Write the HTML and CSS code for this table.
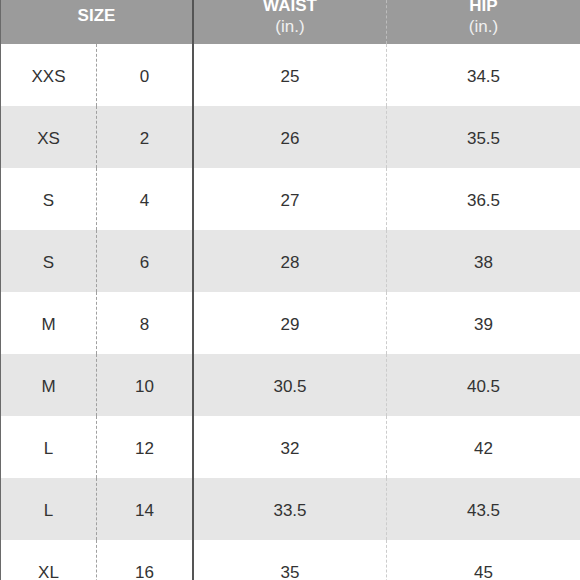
FILE: index.html
```html
<!DOCTYPE html>
<html>
<head>
<meta charset="utf-8">
<link rel="stylesheet" href="styles.css">
</head>
<body>
<div class="chart">
  <div class="row head">
    <div class="cell span2"><span class="h-title">SIZE</span></div>
    <div class="cell c3 hd-two"><span class="h-title">WAIST</span><span class="h-unit">(in.)</span></div>
    <div class="cell c4 hd-two"><span class="h-title">HIP</span><span class="h-unit">(in.)</span></div>
  </div>
  <div class="row"><div class="cell c1">XXS</div><div class="cell c2">0</div><div class="cell c3">25</div><div class="cell c4">34.5</div></div>
  <div class="row alt"><div class="cell c1">XS</div><div class="cell c2">2</div><div class="cell c3">26</div><div class="cell c4">35.5</div></div>
  <div class="row"><div class="cell c1">S</div><div class="cell c2">4</div><div class="cell c3">27</div><div class="cell c4">36.5</div></div>
  <div class="row alt"><div class="cell c1">S</div><div class="cell c2">6</div><div class="cell c3">28</div><div class="cell c4">38</div></div>
  <div class="row"><div class="cell c1">M</div><div class="cell c2">8</div><div class="cell c3">29</div><div class="cell c4">39</div></div>
  <div class="row alt"><div class="cell c1">M</div><div class="cell c2">10</div><div class="cell c3">30.5</div><div class="cell c4">40.5</div></div>
  <div class="row"><div class="cell c1">L</div><div class="cell c2">12</div><div class="cell c3">32</div><div class="cell c4">42</div></div>
  <div class="row alt"><div class="cell c1">L</div><div class="cell c2">14</div><div class="cell c3">33.5</div><div class="cell c4">43.5</div></div>
  <div class="row"><div class="cell c1">XL</div><div class="cell c2">16</div><div class="cell c3">35</div><div class="cell c4">45</div></div>
</div>
</body>
</html>
```
FILE: styles.css
```css
* { box-sizing: border-box; }
html, body { margin: 0; padding: 0; background: #fff; }
body {
  width: 580px;
  height: 580px;
  overflow: hidden;
  font-family: "Liberation Sans", Arial, sans-serif;
  color: #333;
}
.chart {
  display: flex;
  flex-direction: column;
  border-left: 1px solid #6a6a6a;
}
.row {
  display: grid;
  grid-template-columns: 96px 97px 193px 1fr;
  height: 62px;
  flex: none;
}
.row.alt { background: #e6e6e6; }
.cell {
  display: flex;
  align-items: center;
  justify-content: center;
  font-size: 17px;
  padding-top: 3px;
}
.c1 { border-right: 1px dashed #a0a0a0; }
.c2 { border-right: 2px solid #555; }
.c3 { border-right: 1px dashed #cccccc; }
.head {
  height: 44px;
  background: #9b9b9b;
  color: #fff;
}
.head .cell { padding-top: 0; }
.span2 {
  grid-column: 1 / span 2;
  border-right: 2px solid #555;
}
.head .c3 { border-right-color: #bdbdbd; }
.h-title {
  font-weight: bold;
  font-size: 17px;
  line-height: 21px;
}
.span2 .h-title { margin-top: -14px; }
.hd-two {
  flex-direction: column;
  justify-content: flex-start;
  margin-top: -5px;
}
.h-unit {
  font-size: 17px;
  line-height: 22px;
  color: #f0f0f0;
}
```
